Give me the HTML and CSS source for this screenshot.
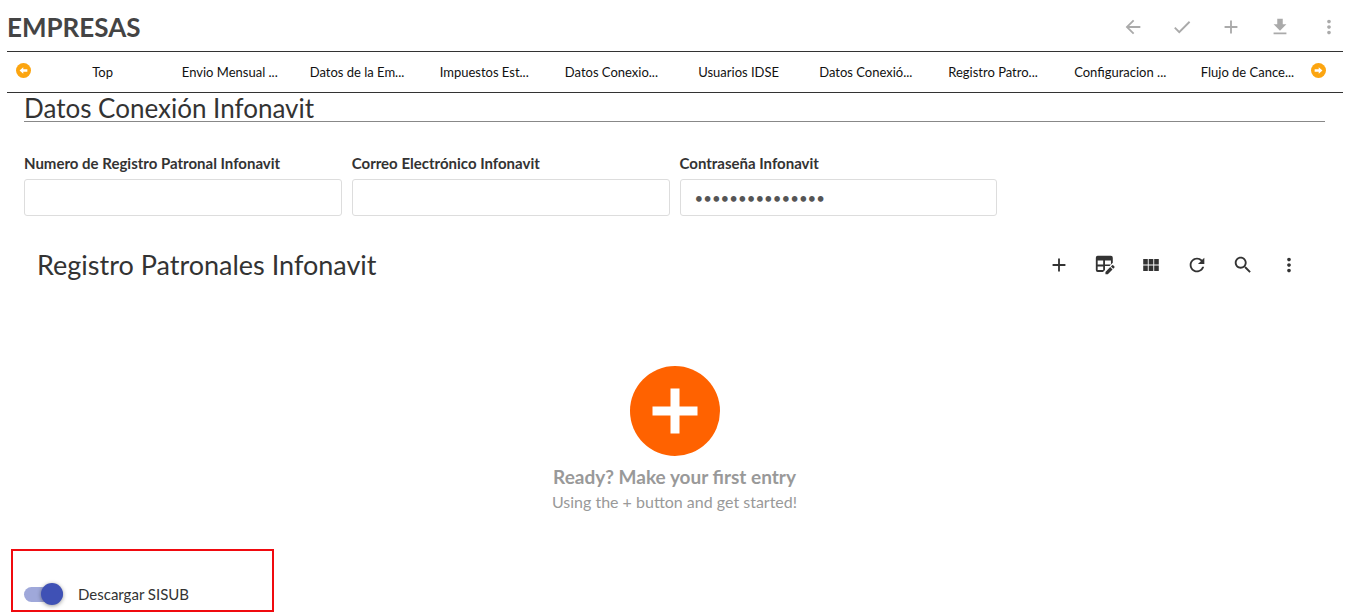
FILE: index.html
```html
<!DOCTYPE html>
<html lang="es">
<head>
    <meta charset="UTF-8">
    <meta name="viewport" content="width=device-width, initial-scale=1.0">
    <title>Empresas</title>
    <link rel="stylesheet" href="styles.css">
</head>
<body>
    <header class="page-header">
        <h1>EMPRESAS</h1>
        <div class="page-actions">
            <button type="button" aria-label="Regresar"><svg viewBox="0 0 24 24"><path d="M20 11H7.830l5.590-5.590L12 4l-8 8 8 8 1.410-1.410L7.830 13H20v-2z"/></svg></button>
            <button type="button" aria-label="Guardar"><svg viewBox="0 0 24 24"><path d="M9 16.170L4.830 12l-1.420 1.410L9 19 21 7l-1.410-1.410z"/></svg></button>
            <button type="button" aria-label="Agregar"><svg viewBox="0 0 24 24"><path d="M19 13h-6v6h-2v-6H5v-2h6V5h2v6h6v2z"/></svg></button>
            <button type="button" aria-label="Descargar"><svg viewBox="0 0 24 24"><path d="M19 9h-4V3H9v6H5l7 7 7-7zM5 18v2h14v-2H5z"/></svg></button>
            <button type="button" aria-label="Opciones"><svg viewBox="0 0 24 24"><path d="M12 8c1.100 0 2-.9 2-2s-.9-2-2-2-2 .9-2 2 .9 2 2 2zm0 2c-1.100 0-2 .9-2 2s.9 2 2 2 2-.9 2-2-.9-2-2-2zm0 6c-1.100 0-2 .9-2 2s.9 2 2 2 2-.9 2-2-.9-2-2-2z"/></svg></button>
        </div>
    </header>

    <nav class="tabs">
        <button type="button" class="tab-arrow prev" aria-label="Anterior">
            <svg viewBox="0 0 14 14"><circle cx="7" cy="7" r="7"/><path d="M3.300 7L6.800 3.900V5.800H10.600V8.200H6.800V10.100z"/></svg>
        </button>
        <a href="#">Top</a>
        <a href="#">Envio Mensual ...</a>
        <a href="#">Datos de la Em...</a>
        <a href="#">Impuestos Est...</a>
        <a href="#">Datos Conexio...</a>
        <a href="#">Usuarios IDSE</a>
        <a href="#">Datos Conexió...</a>
        <a href="#">Registro Patro...</a>
        <a href="#">Configuracion ...</a>
        <a href="#">Flujo de Cance...</a>
        <button type="button" class="tab-arrow next" aria-label="Siguiente">
            <svg viewBox="0 0 14 14"><circle cx="7" cy="7" r="7"/><path d="M10.700 7L7.200 3.900V5.800H3.400V8.200H7.200V10.100z"/></svg>
        </button>
    </nav>

    <main>
        <h2 class="section-title">Datos Conexión Infonavit</h2>

        <form class="fields">
            <div class="field">
                <label for="registro">Numero de Registro Patronal Infonavit</label>
                <input type="text" id="registro" name="registro">
            </div>
            <div class="field">
                <label for="correo">Correo Electrónico Infonavit</label>
                <input type="text" id="correo" name="correo">
            </div>
            <div class="field">
                <label for="clave">Contraseña Infonavit</label>
                <input type="password" id="clave" name="clave" value="123456789012345">
            </div>
        </form>

        <section class="records">
            <div class="records-header">
                <h2>Registro Patronales Infonavit</h2>
                <div class="records-actions">
                    <button type="button" aria-label="Agregar registro"><svg viewBox="0 0 24 24"><path d="M19 13h-6v6h-2v-6H5v-2h6V5h2v6h6v2z"/></svg></button>
                    <button type="button" aria-label="Editar tabla"><svg viewBox="0 0 24 24"><path fill-rule="evenodd" d="M4 2h14.500a2 2 0 0 1 2 2v5.500L17 13h-5v5h-1l-1 1.500H4a2 2 0 0 1-2-2V4a2 2 0 0 1 2-2zM4 7v4.500h6V7zM12 7v4.500h6.500V7zM4 13.500v4h6v-4z"/><path d="M12.500 19.500V22h2.500l5.200-5.200-2.500-2.500zM18.500 13.500l2.500 2.500 1.300-1.300a.8.8 0 0 0 0-1.100L20.900 12.200a.8.8 0 0 0-1.100 0z"/></svg></button>
                    <button type="button" aria-label="Vista"><svg viewBox="0 0 24 24"><path d="M3.500 11.500h5V5.500h-5v6zm0 7h5v-6h-5v6zM9.500 18.500h5v-6h-5v6zm6 0h5v-6h-5v6zm-6-7h5v-6h-5v6zm6-6v6h5v-6h-5z"/></svg></button>
                    <button type="button" aria-label="Actualizar"><svg viewBox="0 0 24 24"><path d="M17.650 6.350C16.200 4.900 14.210 4 12 4c-4.420 0-7.990 3.580-7.990 8s3.570 8 7.990 8c3.730 0 6.840-2.550 7.730-6h-2.080c-.82 2.330-3.040 4-5.650 4-3.310 0-6-2.690-6-6s2.690-6 6-6c1.660 0 3.140.69 4.220 1.780L13 11h7V4l-2.350 2.350z"/></svg></button>
                    <button type="button" aria-label="Buscar"><svg viewBox="0 0 24 24"><path d="M15.500 14h-.79l-.28-.27C15.410 12.590 16 11.110 16 9.500 16 5.910 13.090 3 9.500 3S3 5.910 3 9.500 5.910 16 9.500 16c1.610 0 3.090-.59 4.230-1.570l.27.28v.79l5 4.990L20.490 19l-4.990-5zm-6 0C7.010 14 5 11.990 5 9.500S7.010 5 9.500 5 14 7.010 14 9.500 11.990 14 9.500 14z"/></svg></button>
                    <button type="button" aria-label="Más opciones"><svg viewBox="0 0 24 24"><path d="M12 8c1.100 0 2-.9 2-2s-.9-2-2-2-2 .9-2 2 .9 2 2 2zm0 2c-1.100 0-2 .9-2 2s.9 2 2 2 2-.9 2-2-.9-2-2-2zm0 6c-1.100 0-2 .9-2 2s.9 2 2 2 2-.9 2-2-.9-2-2-2z"/></svg></button>
                </div>
            </div>
            <div class="empty">
                <button type="button" class="empty-add" aria-label="Primer registro">
                    <svg viewBox="0 0 90 90"><path d="M40.500 22.500h9v18h18v9h-18v18h-9v-18h-18v-9h18z"/></svg>
                </button>
                <p class="empty-title">Ready? Make your first entry</p>
                <p class="empty-text">Using the + button and get started!</p>
            </div>
        </section>
    </main>

    <div class="highlight">
        <label class="switch">
            <input type="checkbox" name="sisub" checked>
            <span>Descargar SISUB</span>
        </label>
    </div>
</body>
</html>
```
FILE: styles.css
```css
* {
    box-sizing: border-box;
}
body {
    margin: 0;
    padding: 0 7px;
    background-color: #fff;
    color: #333;
    font-family: Lato, "Liberation Sans", sans-serif;
}
h1, h2, p {
    margin: 0;
}
button {
    padding: 0;
    border: none;
    background: none;
    cursor: pointer;
}
svg {
    display: block;
    fill: currentColor;
}

.page-header {
    display: flex;
    justify-content: space-between;
    align-items: center;
    height: 51px;
    padding-top: 3px;
}
.page-header h1 {
    font-size: 26px;
    line-height: 32px;
    color: #444;
}
.page-actions {
    display: flex;
    gap: 27px;
    margin-right: 3px;
}
.page-actions button {
    color: #aaa;
}
.page-actions svg,
.records-actions svg {
    width: 22px;
    height: 22px;
}

.tabs {
    display: flex;
    align-items: center;
    height: 42px;
    border-top: 1px solid #333;
    border-bottom: 1px solid #333;
}
.tabs a {
    flex: 1;
    color: #111;
    font-size: 13px;
    text-align: center;
    text-decoration: none;
    white-space: nowrap;
}
.tab-arrow {
    flex: 0 0 32px;
    padding-bottom: 4px;
    color: #fca510;
}
.tab-arrow.prev {
    padding-left: 9px;
}
.tab-arrow.next {
    padding-right: 9px;
}
.tab-arrow svg {
    width: 15px;
    height: 15px;
}
.tab-arrow path {
    fill: #fff;
}

main {
    padding: 0 18px 0 17px;
}
.section-title {
    height: 29px;
    border-bottom: 1px solid #888;
    font-size: 26px;
    font-weight: 400;
    line-height: 30px;
}
.fields {
    display: grid;
    grid-template-columns: repeat(4, 1fr);
    gap: 10px;
    margin-top: 31px;
}
.field label {
    display: block;
    margin-bottom: 6px;
    font-size: 15px;
    font-weight: 700;
    line-height: 20px;
}
.field input {
    display: block;
    width: 100%;
    height: 37px;
    padding: 0 14px;
    border: 1px solid #ddd;
    border-radius: 3px;
    background-color: #fff;
    color: #555;
    font-family: inherit;
    font-size: 15px;
}

.records {
    padding: 0 13px;
}
.records-header {
    display: flex;
    justify-content: space-between;
    align-items: center;
    margin-top: 32px;
}
.records-header h2 {
    font-size: 27px;
    font-weight: 400;
    line-height: 34px;
}
.records-actions {
    display: flex;
    gap: 24px;
    margin-right: 12px;
}
.records-actions button {
    color: #333;
}
.empty {
    display: flex;
    flex-direction: column;
    align-items: center;
    padding-top: 84px;
    color: #999;
}
.empty-add {
    width: 90px;
    height: 90px;
    border-radius: 50%;
    background-color: #ff6200;
    color: #fff;
}
.empty-title {
    margin-top: 8px;
    font-size: 19px;
    font-weight: 700;
    line-height: 26px;
}
.empty-text {
    font-size: 16px;
    line-height: 24px;
}

.highlight {
    width: 263px;
    margin: 35px 0 0 4px;
    padding: 29px 11px 2px;
    border: 2px solid #f00a0f;
}
.switch {
    display: flex;
    align-items: center;
    gap: 15px;
    font-size: 15px;
    line-height: 28px;
}
.switch input {
    display: flex;
    align-items: center;
    justify-content: flex-end;
    width: 39px;
    height: 15px;
    margin: 0;
    border-radius: 8px;
    background-color: #9fa8da;
    appearance: none;
}
.switch input::before {
    content: "";
    flex: none;
    width: 22px;
    height: 22px;
    border-radius: 50%;
    background-color: #3f51b5;
    box-shadow: 0 1px 4px rgba(0, 0, 0, 0.4);
}
.switch input:not(:checked) {
    justify-content: flex-start;
}
```
